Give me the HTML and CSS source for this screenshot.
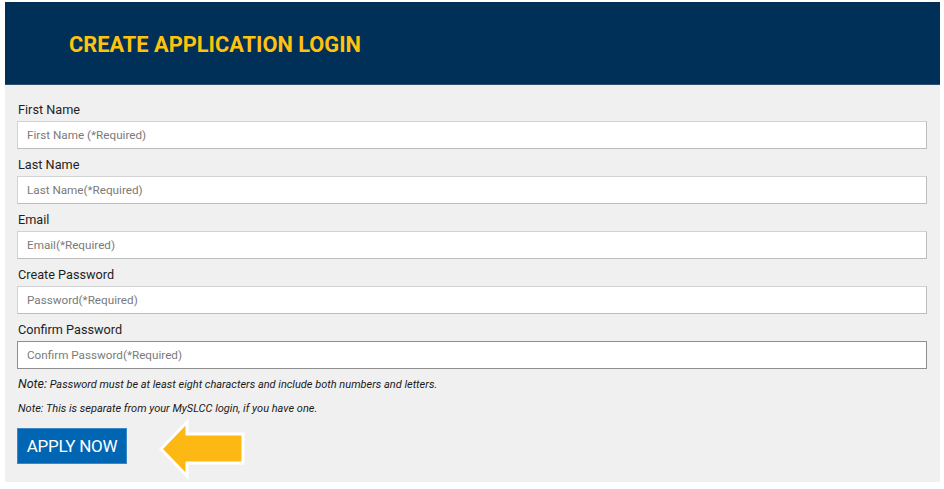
FILE: index.html
```html
<!DOCTYPE html>
<html lang="en">
<head>
    <meta charset="UTF-8">
    <meta name="viewport" content="width=device-width, initial-scale=1.0">
    <title>Create Application Login</title>
    <link rel="stylesheet" href="styles.css">
</head>
<body>
    <div class="login-panel">
        <div class="login-header">
            <h1>CREATE APPLICATION LOGIN</h1>
        </div>

        <form class="login-form">
            <div class="field">
                <label for="firstName">First Name</label>
                <input type="text" id="firstName" placeholder="First Name (*Required)">
            </div>
            <div class="field">
                <label for="lastName">Last Name</label>
                <input type="text" id="lastName" placeholder="Last Name(*Required)">
            </div>
            <div class="field">
                <label for="email">Email</label>
                <input type="email" id="email" placeholder="Email(*Required)">
            </div>
            <div class="field">
                <label for="password">Create Password</label>
                <input type="password" id="password" placeholder="Password(*Required)">
            </div>
            <div class="field">
                <label for="confirmPassword">Confirm Password</label>
                <input type="password" id="confirmPassword" class="active" placeholder="Confirm Password(*Required)">
            </div>

            <p class="note first-note"><span class="note-label">Note:</span> Password must be at least eight characters and include both numbers and letters.</p>
            <p class="note">Note: This is separate from your MySLCC login, if you have one.</p>

            <div class="apply-row">
                <button type="button" class="apply-btn">APPLY NOW</button>
                <!-- pointer arrow -->
                <svg class="pointer-arrow" width="88" height="62" viewBox="0 0 88 62">
                    <polygon points="3,31 29,4 29,16 85,16 85,45 29,45 29,58" fill="#fdb813" stroke="#ffffff" stroke-width="3"></polygon>
                </svg>
            </div>
        </form>
    </div>
</body>
</html>
```

FILE: styles.css
```css
/* Application login panel */
body {
    margin: 0;
    background-color: #ffffff;
    font-family: Roboto, "Liberation Sans", Arial, sans-serif;
    color: #222;
}
.login-panel {
    width: 935px;
    margin: 2px 0 0 5px;
    background-color: #f0f0f0;
}
.login-header {
    height: 83px;
    background-color: #003057;
    border-bottom: 1px solid #2c4f74;
    box-sizing: border-box;
    display: flex;
    align-items: center;
    padding: 3px 0 0 64px;
}
.login-header h1 {
    margin: 0;
    font-size: 21.8px;
    font-weight: 700;
    color: #ffc20e;
}
.login-form {
    padding: 16px 13px 18px 12px;
}
.field {
    margin-bottom: 7px;
}
.field label {
    display: block;
    font-size: 12.7px;
    line-height: 18px;
    margin: 0 0 2px 1px;
    color: #1f1f1f;
}
.field input {
    display: block;
    width: 100%;
    height: 28px;
    box-sizing: border-box;
    padding: 0 9px;
    border: 1px solid #d2d2d2;
    border-right-color: #bdbdbd;
    border-bottom-color: #bdbdbd;
    background-color: #fff;
    font-family: Roboto, "Liberation Sans", Arial, sans-serif;
    font-size: 11.7px;
    color: #333;
    outline: none;
}
.field input.active {
    border-color: #8f8f8f;
}
.field input::placeholder {
    color: #7a7a7a;
}
.note {
    margin: 0 0 8px 1px;
    font-size: 11px;
    line-height: 16px;
    font-style: italic;
    color: #1a1a1a;
}
.note-label {
    font-size: 12.5px;
}
.apply-row {
    display: flex;
    align-items: flex-start;
    margin-top: 11px;
}
.apply-btn {
    width: 110px;
    height: 36px;
    background-color: #0066b3;
    color: #fff;
    border: 1px solid #3d86c4;
    font-family: Roboto, "Liberation Sans", Arial, sans-serif;
    font-size: 17px;
    letter-spacing: -0.3px;
    padding: 0;
    cursor: pointer;
}
.pointer-arrow {
    margin: -10px 0 -16px 31px;
}
```
